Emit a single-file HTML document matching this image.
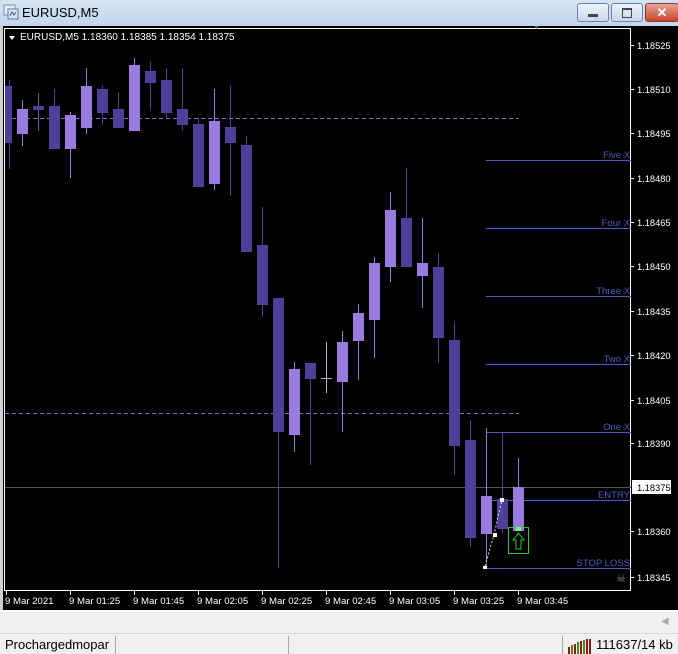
<!DOCTYPE html>
<html><head><meta charset="utf-8"><style>
html,body{margin:0;padding:0;width:678px;height:653px;overflow:hidden;background:#f0f0f0;font-family:"Liberation Sans",sans-serif}
#title{position:absolute;left:0;top:0;width:678px;height:26px;background:linear-gradient(#d6e4f5,#c2d6ee);}
#title .t{position:absolute;left:22px;top:5px;font-size:13px;color:#000}
.btn{position:absolute;top:3px;height:17px;border:1px solid #6e84a6;border-radius:3px;background:linear-gradient(#eef3fa,#c9d7ea)}
#chart{position:absolute;left:0;top:26px}
#gray{position:absolute;left:0;top:610px;width:678px;height:22px;background:#f0f0f0;border-top:2px solid #fff}
#status{position:absolute;left:0;top:633px;width:678px;height:20px;background:#f0f0f0;border-top:1px solid #d6d6d6;font-size:13px}
</style></head><body>
<div id="title">
<svg style="position:absolute;left:3px;top:4px" width="16" height="16"><rect x="1" y="1" width="11" height="10" fill="#e8eef8" stroke="#7a8fb0"/><rect x="5" y="5" width="10" height="10" fill="#d8e4f4" stroke="#5b79a8"/><path d="M7 12l2-4 2 3 2-3" stroke="#3a5a9a" fill="none"/></svg>
<span class="t">EURUSD,M5</span>
<div class="btn" style="left:577px;width:30px"><div style="position:absolute;left:10px;top:10px;width:10px;height:3px;background:#445;"></div></div>
<div class="btn" style="left:611px;width:30px"><div style="position:absolute;left:10px;top:4px;width:8px;height:7px;border:1px solid #445;border-top-width:2px"></div></div>
<div class="btn" style="left:645px;width:32px;background:linear-gradient(#e8a595,#c7442c);border-color:#8a3b30"><div style="position:absolute;left:0;top:0;width:32px;text-align:center;color:#fff;font-weight:bold;font-size:13px;line-height:17px">✕</div></div>
</div>
<svg id="chart" width="678" height="584" viewBox="0 26 678 584" font-family="Liberation Sans, sans-serif">
<rect x="0" y="26" width="678" height="584" fill="#000"/>
<rect x="0" y="26" width="3" height="584" fill="#d0d0d0"/>
<rect x="4.5" y="28.5" width="626" height="562" fill="none" stroke="#fff"/>
<path d="M9 36l3 4 3-4z" fill="#fff"/>
<text x="20" y="40" font-size="10" fill="#fff">EURUSD,M5  1.18360 1.18385 1.18354 1.18375</text>
<g stroke="#7d6fc0" stroke-dasharray="4,3" stroke-width="1"><line x1="5" y1="118.5" x2="519" y2="118.5"/><line x1="5" y1="413.5" x2="519" y2="413.5"/></g>
<line x1="5" y1="487.5" x2="631" y2="487.5" stroke="#555"/>
<g stroke="#4a5cc0" stroke-width="1">
<line x1="486" y1="160.5" x2="631" y2="160.5"/><line x1="486" y1="228.5" x2="631" y2="228.5"/><line x1="486" y1="296.5" x2="631" y2="296.5"/><line x1="486" y1="364.5" x2="631" y2="364.5"/><line x1="486" y1="432.5" x2="631" y2="432.5"/><line x1="486" y1="500.5" x2="631" y2="500.5"/><line x1="486" y1="568.5" x2="631" y2="568.5"/><line x1="486.5" y1="432" x2="486.5" y2="568"/></g>
<g font-size="9.5" fill="#4a5cc0" text-anchor="end">
<text x="630" y="158">Five X</text><text x="630" y="226">Four X</text><text x="630" y="294">Three X</text><text x="630" y="362">Two X</text><text x="630" y="430">One X</text><text x="630" y="498">ENTRY</text><text x="630" y="566">STOP LOSS</text></g>
<g id="c">
<g stroke-width="1">
<line x1="9.5" y1="80" x2="9.5" y2="169" stroke="#4f3f99"/>
<line x1="22.5" y1="100" x2="22.5" y2="146" stroke="#9a7be0"/>
<line x1="38.5" y1="93" x2="38.5" y2="131" stroke="#6a5ab0"/>
<line x1="54.5" y1="89" x2="54.5" y2="149" stroke="#4f3f99"/>
<line x1="70.5" y1="112" x2="70.5" y2="178" stroke="#9a7be0"/>
<line x1="86.5" y1="68" x2="86.5" y2="134" stroke="#9a7be0"/>
<line x1="102.5" y1="86" x2="102.5" y2="125" stroke="#4f3f99"/>
<line x1="118.5" y1="92" x2="118.5" y2="128" stroke="#4f3f99"/>
<line x1="134.5" y1="58" x2="134.5" y2="131" stroke="#9a7be0"/>
<line x1="150.5" y1="62" x2="150.5" y2="110" stroke="#4f3f99"/>
<line x1="166.5" y1="68" x2="166.5" y2="118" stroke="#4f3f99"/>
<line x1="182.5" y1="68" x2="182.5" y2="130" stroke="#4f3f99"/>
<line x1="198.5" y1="118" x2="198.5" y2="187" stroke="#4f3f99"/>
<line x1="214.5" y1="89" x2="214.5" y2="190" stroke="#9a7be0"/>
<line x1="230.5" y1="86" x2="230.5" y2="196" stroke="#4f3f99"/>
<line x1="246.5" y1="136" x2="246.5" y2="252" stroke="#4f3f99"/>
<line x1="262.5" y1="207" x2="262.5" y2="317" stroke="#4f3f99"/>
<line x1="278.5" y1="298" x2="278.5" y2="568" stroke="#4f3f99"/>
<line x1="294.5" y1="362" x2="294.5" y2="452" stroke="#9a7be0"/>
<line x1="310.5" y1="363" x2="310.5" y2="465" stroke="#4f3f99"/>
<line x1="326.5" y1="342" x2="326.5" y2="393" stroke="#b0a8d8"/>
<line x1="342.5" y1="331" x2="342.5" y2="432" stroke="#9a7be0"/>
<line x1="358.5" y1="304" x2="358.5" y2="380" stroke="#9a7be0"/>
<line x1="374.5" y1="257" x2="374.5" y2="358" stroke="#9a7be0"/>
<line x1="390.5" y1="192" x2="390.5" y2="282" stroke="#9a7be0"/>
<line x1="406.5" y1="168" x2="406.5" y2="267" stroke="#4f3f99"/>
<line x1="422.5" y1="218" x2="422.5" y2="308" stroke="#9a7be0"/>
<line x1="438.5" y1="253" x2="438.5" y2="363" stroke="#4f3f99"/>
<line x1="454.5" y1="322" x2="454.5" y2="475" stroke="#4f3f99"/>
<line x1="470.5" y1="420" x2="470.5" y2="547" stroke="#4f3f99"/>
<line x1="486.5" y1="428" x2="486.5" y2="562" stroke="#9a7be0"/>
<line x1="502.5" y1="433" x2="502.5" y2="533" stroke="#4f3f99"/>
<line x1="518.5" y1="458" x2="518.5" y2="531" stroke="#9a7be0"/>
</g>
<g fill="#4f3f99">
<rect x="5" y="86" width="7" height="57"/>
<rect x="33" y="106" width="11" height="4"/>
<rect x="49" y="106" width="11" height="43"/>
<rect x="97" y="89" width="11" height="24"/>
<rect x="113" y="109" width="11" height="19"/>
<rect x="145" y="71" width="11" height="12"/>
<rect x="161" y="80" width="11" height="33"/>
<rect x="177" y="109" width="11" height="16"/>
<rect x="193" y="124" width="11" height="63"/>
<rect x="225" y="127" width="11" height="16"/>
<rect x="241" y="145" width="11" height="107"/>
<rect x="257" y="245" width="11" height="60"/>
<rect x="273" y="298" width="11" height="134"/>
<rect x="305" y="363" width="11" height="16"/>
<rect x="401" y="218" width="11" height="49"/>
<rect x="433" y="267" width="11" height="71"/>
<rect x="449" y="340" width="11" height="106"/>
<rect x="465" y="440" width="11" height="98"/>
<rect x="497" y="499" width="11" height="30"/>
</g>
<g fill="#9a7be0">
<rect x="17" y="109" width="11" height="25"/>
<rect x="65" y="115" width="11" height="34"/>
<rect x="81" y="86" width="11" height="42"/>
<rect x="129" y="65" width="11" height="66"/>
<rect x="209" y="121" width="11" height="63"/>
<rect x="289" y="369" width="11" height="66"/>
<rect x="337" y="342" width="11" height="40"/>
<rect x="353" y="313" width="11" height="28"/>
<rect x="369" y="263" width="11" height="57"/>
<rect x="385" y="210" width="11" height="57"/>
<rect x="417" y="263" width="11" height="13"/>
<rect x="481" y="496" width="11" height="38"/>
<rect x="513" y="487" width="11" height="44"/>
</g>
<line x1="321" y1="378.5" x2="332" y2="378.5" stroke="#b0a8d8"/>
</g>
<path d="M485 566 L491 545 L494 535 L499 512 L502 500" stroke="#ddd" stroke-dasharray="2,2" fill="none"/>
<rect x="483" y="566" width="4" height="3" fill="#fff"/><rect x="493" y="533" width="4" height="4" fill="#fff"/><rect x="500" y="498" width="4" height="4" fill="#fff"/>
<rect x="508.5" y="527.5" width="20" height="26" fill="none" stroke="#2ec82e"/>
<rect x="516" y="527" width="5" height="4" fill="#7f7"/>
<path d="M518.5 533 L513 540 L516 540 L516 549 L521 549 L521 540 L524 540 Z" fill="none" stroke="#2ec82e"/>
<text x="621" y="582" font-size="11" fill="#888" text-anchor="middle">☠</text>
<g fill="#fff" font-size="9.3">
<rect x="632" y="480" width="39" height="14" fill="#fff"/>
<text x="637" y="49">1.18525</text><text x="637" y="93">1.18510</text><text x="637" y="137">1.18495</text><text x="637" y="182">1.18480</text><text x="637" y="226">1.18465</text><text x="637" y="270">1.18450</text><text x="637" y="315">1.18435</text><text x="637" y="359">1.18420</text><text x="637" y="404">1.18405</text><text x="637" y="447">1.18390</text><text x="637" y="491" fill="#000">1.18375</text><text x="637" y="535">1.18360</text><text x="637" y="581">1.18345</text>
</g>
<g stroke="#fff"><line x1="631" y1="45.5" x2="634" y2="45.5"/><line x1="631" y1="89.5" x2="634" y2="89.5"/><line x1="631" y1="133.5" x2="634" y2="133.5"/><line x1="631" y1="178.5" x2="634" y2="178.5"/><line x1="631" y1="222.5" x2="634" y2="222.5"/><line x1="631" y1="266.5" x2="634" y2="266.5"/><line x1="631" y1="311.5" x2="634" y2="311.5"/><line x1="631" y1="355.5" x2="634" y2="355.5"/><line x1="631" y1="400.5" x2="634" y2="400.5"/><line x1="631" y1="443.5" x2="634" y2="443.5"/><line x1="631" y1="531.5" x2="634" y2="531.5"/><line x1="631" y1="577.5" x2="634" y2="577.5"/>
<line x1="6.5" y1="591" x2="6.5" y2="595"/><line x1="70.5" y1="591" x2="70.5" y2="595"/><line x1="134.5" y1="591" x2="134.5" y2="595"/><line x1="198.5" y1="591" x2="198.5" y2="595"/><line x1="262.5" y1="591" x2="262.5" y2="595"/><line x1="326.5" y1="591" x2="326.5" y2="595"/><line x1="390.5" y1="591" x2="390.5" y2="595"/><line x1="454.5" y1="591" x2="454.5" y2="595"/><line x1="518.5" y1="591" x2="518.5" y2="595"/></g>
<g fill="#fff" font-size="9.6">
<text x="5" y="604">9 Mar 2021</text><text x="69" y="604">9 Mar 01:25</text><text x="133" y="604">9 Mar 01:45</text><text x="197" y="604">9 Mar 02:05</text><text x="261" y="604">9 Mar 02:25</text><text x="325" y="604">9 Mar 02:45</text><text x="389" y="604">9 Mar 03:05</text><text x="453" y="604">9 Mar 03:25</text><text x="517" y="604">9 Mar 03:45</text>
</g>
<path d="M534 26 l5 0 l-2.5 3z" fill="#555"/>
</svg>
<div id="gray"><div style="position:absolute;left:661px;top:4px;color:#aaa;font-size:10px">◀</div></div>
<div id="status">
<span style="position:absolute;left:5px;top:3px;color:#000">Prochargedmopar</span>
<div style="position:absolute;left:115px;top:2px;width:1px;height:18px;background:#aaa"></div>
<div style="position:absolute;left:288px;top:2px;width:1px;height:18px;background:#aaa"></div>
<div style="position:absolute;left:562px;top:2px;width:1px;height:18px;background:#aaa"></div>
<svg style="position:absolute;left:568px;top:4px" width="24" height="16"><g stroke-width="2"><line x1="1" y1="16" x2="1" y2="9" stroke="#8b1a1a"/><line x1="4" y1="16" x2="4" y2="7" stroke="#4a8a1a"/><line x1="7" y1="16" x2="7" y2="6" stroke="#8b1a1a"/><line x1="10" y1="16" x2="10" y2="4" stroke="#4a8a1a"/><line x1="13" y1="16" x2="13" y2="3" stroke="#8b1a1a"/><line x1="16" y1="16" x2="16" y2="2" stroke="#4a8a1a"/><line x1="19" y1="16" x2="19" y2="1" stroke="#8b1a1a"/><line x1="22" y1="16" x2="22" y2="1" stroke="#8b1a1a"/></g></svg>
<span style="position:absolute;left:596px;top:3px;color:#000">111637/14 kb</span>
</div>
</body></html>
